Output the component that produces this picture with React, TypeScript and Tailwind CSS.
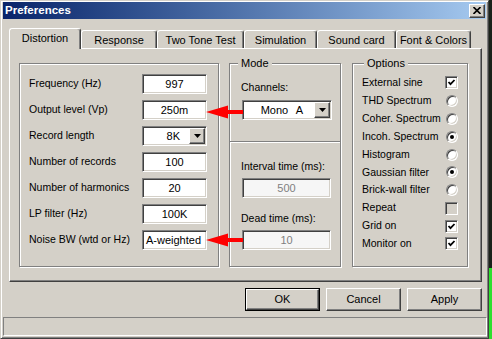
import React from 'react';

const sunken =
  'border border-t-[#808080] border-l-[#808080] border-b-white border-r-white shadow-[inset_1px_1px_0_#404040,inset_-1px_-1px_0_#d4d0c8]';
const raised =
  'border border-t-white border-l-white border-b-[#404040] border-r-[#404040] shadow-[inset_-1px_-1px_0_#808080]';
const etched = 'border border-[#808080] shadow-[1px_1px_0_#fff,inset_1px_1px_0_#fff]';

const tabs = [
  { label: 'Distortion', w: 'w-[72px]', active: true },
  { label: 'Response', w: 'w-[76px]' },
  { label: 'Two Tone Test', w: 'w-[87px]' },
  { label: 'Simulation', w: 'w-[73px]' },
  { label: 'Sound card', w: 'w-[79px]' },
  { label: 'Font & Colors', w: 'w-[75px]' },
];

const fields: { label: string; value: string; combo?: boolean; left?: boolean }[] = [
  { label: 'Frequency (Hz)', value: '997' },
  { label: 'Output level (Vp)', value: '250m' },
  { label: 'Record length', value: '8K', combo: true },
  { label: 'Number of records', value: '100' },
  { label: 'Number of harmonics', value: '20' },
  { label: 'LP filter (Hz)', value: '100K' },
  { label: 'Noise BW (wtd or Hz)', value: 'A-weighted', left: true },
];

const options: { label: string; kind: 'check' | 'radio'; on: boolean; gray?: boolean }[] = [
  { label: 'External sine', kind: 'check', on: true },
  { label: 'THD Spectrum', kind: 'radio', on: false },
  { label: 'Coher. Spectrum', kind: 'radio', on: false },
  { label: 'Incoh. Spectrum', kind: 'radio', on: true },
  { label: 'Histogram', kind: 'radio', on: false },
  { label: 'Gaussian filter', kind: 'radio', on: true },
  { label: 'Brick-wall filter', kind: 'radio', on: false },
  { label: 'Repeat', kind: 'check', on: false, gray: true },
  { label: 'Grid on', kind: 'check', on: true },
  { label: 'Monitor on', kind: 'check', on: true },
];

function DropButton() {
  return (
    <div className={`${raised} w-[16px] h-[16px] bg-[#d4d0c8] flex items-center justify-center shrink-0`}>
      <svg width="7" height="4" viewBox="0 0 7 4">
        <polygon points="0,0 7,0 3.5,4" fill="#000" />
      </svg>
    </div>
  );
}

function CheckBox({ on, gray }: { on: boolean; gray?: boolean }) {
  return (
    <div className={`${sunken} w-[13px] h-[13px] flex items-center justify-center ${gray ? 'bg-[#d4d0c8]' : 'bg-white'}`}>
      {on && (
        <svg width="9" height="9" viewBox="0 0 9 9">
          <polyline points="1.5,4 3.5,6.2 7.5,2" fill="none" stroke="#000" strokeWidth="1.8" />
        </svg>
      )}
    </div>
  );
}

function Radio({ on }: { on: boolean }) {
  return (
    <div className="w-[12px] h-[12px] rounded-full bg-white border border-t-[#808080] border-l-[#808080] border-b-white border-r-white shadow-[inset_1px_1px_0_#404040,inset_-1px_-1px_0_#d4d0c8] flex items-center justify-center">
      {on && <div className="w-[4px] h-[4px] rounded-full bg-black" />}
    </div>
  );
}

function App() {
  return (
    <div className="w-[492px] h-[339px] flex bg-[#1a221a] font-['Liberation_Sans',Arial,sans-serif] text-black overflow-hidden">
      <div className="relative w-[489px] h-[339px] shrink-0 bg-[#d4d0c8] border border-t-[#d4d0c8] border-l-[#d4d0c8] border-b-[#404040] border-r-[#404040] shadow-[inset_1px_1px_0_#fff,inset_-1px_-1px_0_#808080] flex flex-col">
        {/* title bar */}
        <div className="mx-[2px] mt-[1px] h-[17px] bg-gradient-to-r from-[#0a246a] to-[#a6caf0] flex items-center justify-between pl-[2px] pr-[1px]">
          <span className="text-white font-bold text-[11.5px] leading-none">Preferences</span>
          <div className={`${raised} w-[16px] h-[14px] bg-[#d4d0c8] flex items-center justify-center`}>
            <svg width="8" height="7" viewBox="0 0 8 7">
              <path d="M0.5 0 L7.5 7 M7.5 0 L0.5 7" stroke="#000" strokeWidth="1.6" />
            </svg>
          </div>
        </div>

        <div className="pl-[8px] pt-[9px] flex flex-col">
          {/* tabs */}
          <div className="flex items-end h-[20px] text-[11px]">
            {tabs.map((t) =>
              t.active ? (
                <div
                  key={t.label}
                  className={`${t.w} h-[21px] -mb-[1px] relative z-10 bg-[#d4d0c8] border-l border-t border-r border-l-white border-t-white border-r-[#404040] shadow-[inset_-1px_0_0_#808080] rounded-t-[3px] flex items-center justify-center pb-[1px]`}
                >
                  {t.label}
                </div>
              ) : (
                <div
                  key={t.label}
                  className={`${t.w} h-[18px] bg-[#d4d0c8] border-l border-t border-r border-l-white border-t-white border-r-[#404040] shadow-[inset_-1px_0_0_#808080] rounded-t-[3px] flex items-center justify-center pt-[2px]`}
                >
                  {t.label}
                </div>
              )
            )}
          </div>

          {/* panel */}
          <div className="w-[473px] h-[234px] border border-t-white border-l-white border-b-[#404040] border-r-[#404040] shadow-[inset_-1px_-1px_0_#808080] pl-[9px] pt-[14px] flex items-start">
            {/* parameters */}
            <div className={`${etched} w-[200px] h-[204px] pl-[9px] pr-[11px] pt-[10px] flex flex-col gap-[6px] text-[10.5px]`}>
              {fields.map((f) => (
                <div key={f.label} className="h-[20px] flex items-center">
                  <span className="flex-1 whitespace-nowrap">{f.label}</span>
                  {f.combo ? (
                    <div className={`${sunken} bg-white w-[65px] h-[20px] flex items-center pr-[1px]`}>
                      <span className="flex-1 text-right pr-[9px] text-[11px]">{f.value}</span>
                      <DropButton />
                    </div>
                  ) : (
                    <div
                      className={`${sunken} bg-white w-[65px] h-[20px] flex items-center text-[11px] ${
                        f.left ? 'justify-start pl-[3px]' : 'justify-center'
                      }`}
                    >
                      {f.value}
                    </div>
                  )}
                </div>
              ))}
            </div>

            {/* mode */}
            <div className={`${etched} relative ml-[10px] w-[112px] h-[204px] flex flex-col text-[10.5px]`}>
              <span className="absolute -top-[7px] left-[8px] bg-[#d4d0c8] px-[3px] leading-[13px] text-[11px]">Mode</span>
              <div className="pl-[11px] pt-[17px] leading-[13px] h-[13px] box-content">Channels:</div>
              <div className={`${sunken} bg-white ml-[12px] mt-[6px] w-[90px] h-[20px] flex items-center pr-[1px]`}>
                <span className="flex-1 text-right pr-[11px] text-[11px] [word-spacing:5px]">Mono A</span>
                <DropButton />
              </div>
              <div className="mt-[21px] h-[2px] border-t border-t-[#808080] border-b border-b-white" />
              <div className="pl-[11px] mt-[17px] leading-[13px] h-[13px]">Interval time (ms):</div>
              <div className={`${sunken} bg-[#f6f6f6] ml-[12px] mt-[5px] w-[89px] h-[20px] flex items-center justify-center text-[#808080] text-[11px]`}>
                500
              </div>
              <div className="pl-[11px] mt-[14px] leading-[13px] h-[13px]">Dead time (ms):</div>
              <div className={`${sunken} bg-[#f6f6f6] ml-[12px] mt-[5px] w-[89px] h-[20px] flex items-center justify-center text-[#808080] text-[11px]`}>
                10
              </div>
            </div>

            {/* options */}
            <div className={`${etched} relative ml-[11px] w-[116px] h-[204px] pl-[9px] pr-[9px] pt-[10px] flex flex-col text-[10.5px]`}>
              <span className="absolute -top-[7px] left-[11px] bg-[#d4d0c8] px-[3px] leading-[13px] text-[11px]">Options</span>
              {options.map((o) => (
                <div key={o.label} className="h-[17.9px] flex items-center">
                  <span className="flex-1 whitespace-nowrap">{o.label}</span>
                  <div className="w-[13px] flex justify-center">
                    {o.kind === 'check' ? <CheckBox on={o.on} gray={o.gray} /> : <Radio on={o.on} />}
                  </div>
                </div>
              ))}
            </div>
          </div>

          {/* buttons */}
          <div className="w-[473px] mt-[6px] flex justify-end gap-[6px] text-[11px]">
            <div className="w-[75px] h-[23px] border border-black">
              <div className={`${raised} w-full h-full bg-[#d4d0c8] flex items-center justify-center`}>OK</div>
            </div>
            <div className={`${raised} w-[75px] h-[23px] bg-[#d4d0c8] flex items-center justify-center`}>Cancel</div>
            <div className={`${raised} w-[75px] h-[23px] bg-[#d4d0c8] flex items-center justify-center`}>Apply</div>
          </div>
        </div>

        {/* status bar */}
        <div className="mt-[6px] ml-[2px] mr-[1px] h-[19px] border border-t-[#808080] border-l-[#808080] border-b-white border-r-white" />

        {/* annotation arrows */}
        <svg className="absolute left-[-1px] top-[-1px] pointer-events-none" width="489" height="339">
          <polygon points="206,112 228,105.5 228,110 243,110 243,114 228,114 228,118.5" fill="#ff0000" />
          <polygon points="206,240 228,233.5 228,238 243,238 243,242 228,242 228,246.5" fill="#ff0000" />
        </svg>
      </div>
      <div className="flex-1 flex flex-col">
        <div className="h-[268px] bg-[#1a221a]" />
        <div className="flex-1 bg-[#2ee02e]" />
      </div>
    </div>
  );
}

export default App;
